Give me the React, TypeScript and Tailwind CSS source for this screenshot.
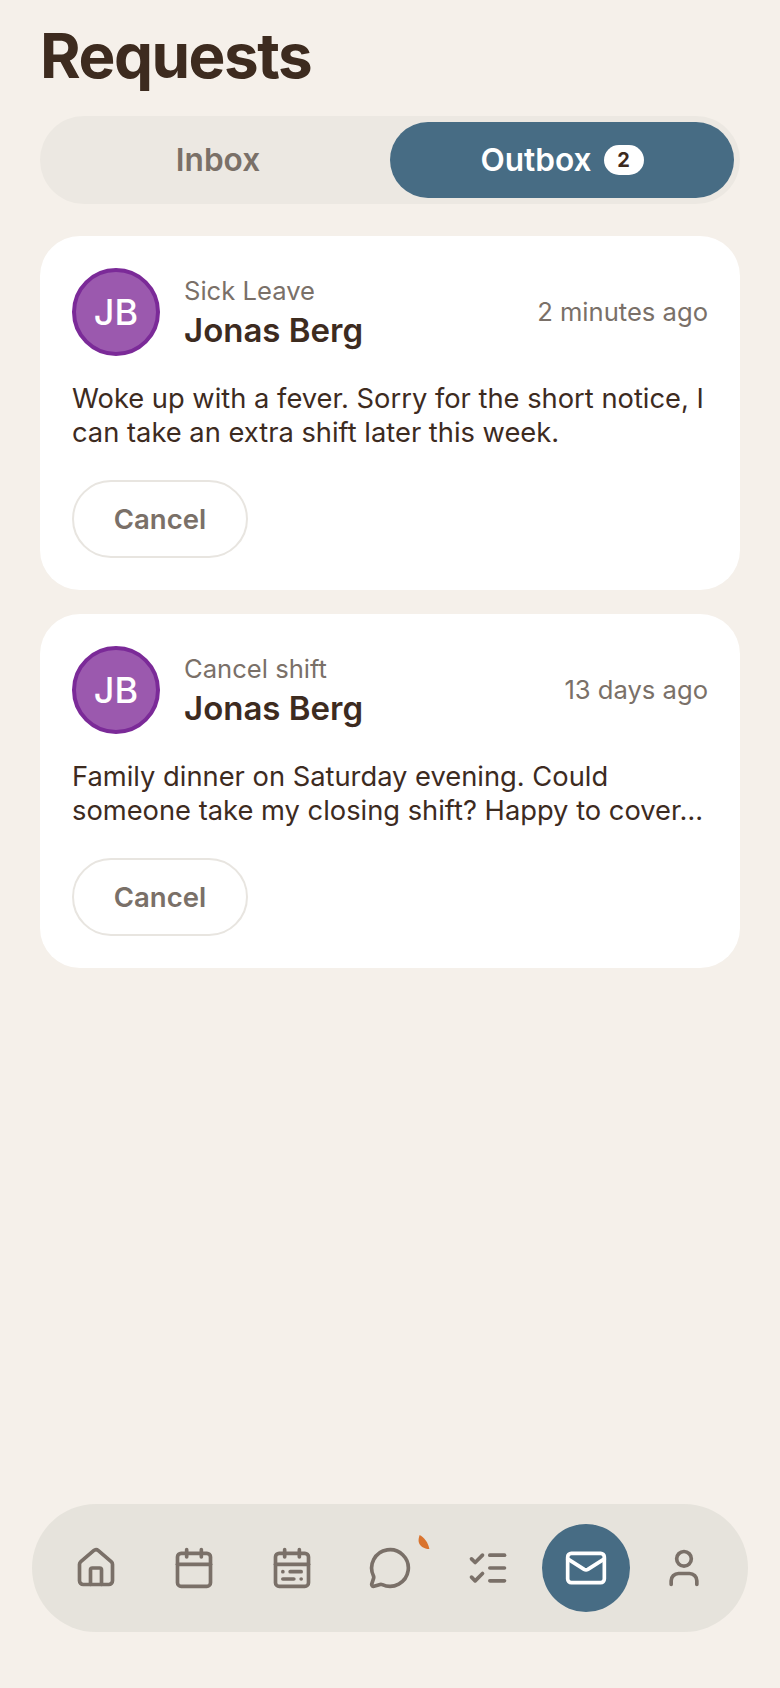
import { CalendarRange, Calendar, House, ListChecks, Mail, MessageCircle, User } from 'lucide-react'

const requests = [
  {
    type: 'Sick Leave',
    name: 'Jonas Berg',
    time: '2 minutes ago',
    message: 'Woke up with a fever. Sorry for the short notice, I can take an extra shift later this week.',
  },
  {
    type: 'Cancel shift',
    name: 'Jonas Berg',
    time: '13 days ago',
    message: 'Family dinner on Saturday evening. Could someone take my closing shift? Happy to cover…',
  },
]

function RequestCard({ type, name, time, message }: (typeof requests)[number]) {
  return (
    <div className="rounded-[40px] bg-white p-8">
      <div className="flex items-center">
        <div className="flex h-[88px] w-[88px] items-center justify-center rounded-full border-4 border-[#7b2a98] bg-[#9b59ae] text-[36px] font-medium text-white">
          JB
        </div>
        <div className="ml-6 flex-1">
          <div className="pt-px text-[25.6px] leading-[32px] text-[#7a7068]">{type}</div>
          <div className="mt-[3px] text-[33px] leading-[40px] font-semibold text-[#3d2b1f]">{name}</div>
        </div>
        <div className="pt-px text-[25.6px] text-[#7a7068]">{time}</div>
      </div>
      <p className="mt-[26px] text-[27.3px] leading-[34px] text-[#3d2b1f]">{message}</p>
      <button className="mt-[30px] block h-[78px] w-[176px] rounded-full border-2 border-[#e8e5e0] pt-px text-[27.5px] font-semibold text-[#7a7068]">
        Cancel
      </button>
    </div>
  )
}

function App() {
  return (
    <div className="flex h-[1688px] flex-col bg-[#f5f0ea] px-10 font-['Inter',sans-serif]">
      <h1 className="mt-[16px] text-[62px] leading-[80px] font-bold tracking-[-1.5px] text-[#3d2b1f]">Requests</h1>

      <div className="mt-[20px] flex h-[88px] rounded-full bg-[#ece8e2] p-[6px]">
        <div className="flex flex-1 items-center justify-center text-[31.6px] font-semibold text-[#7a7068]">Inbox</div>
        <div className="flex flex-1 items-center justify-center gap-3 rounded-full bg-[#476c84] text-[31.6px] font-semibold text-white">
          Outbox
          <span className="flex h-[30px] w-[40px] items-center justify-center rounded-full bg-white text-[20px] font-bold text-[#3d2b1f]">
            2
          </span>
        </div>
      </div>

      <div className="mt-8 flex flex-col gap-6">
        {requests.map((r) => (
          <RequestCard key={r.type} {...r} />
        ))}
      </div>

      <nav className="mt-auto mb-14 -mx-2 flex h-[128px] items-center gap-[10px] rounded-full bg-[#e6e3dc] px-5 text-[#7a7068]">
        <NavItem><House size={44} strokeWidth={2} /></NavItem>
        <NavItem><Calendar size={44} strokeWidth={2} /></NavItem>
        <NavItem><CalendarRange size={44} strokeWidth={2} /></NavItem>
        <NavItem>
          <MessageCircle size={44} strokeWidth={2} />
          {/* clipped unread dot */}
          <svg className="absolute top-[11px] right-[4px]" width="12" height="14" viewBox="0 0 10 13">
            <path d="M1 0C5 2 9 7 10 13 5 13 .5 10 0 6 -.2 4 .3 1.5 1 0Z" fill="#d9742f" />
          </svg>
        </NavItem>
        <NavItem><ListChecks size={44} strokeWidth={2} /></NavItem>
        <NavItem active><Mail size={44} strokeWidth={2} /></NavItem>
        <NavItem><User size={44} strokeWidth={2} /></NavItem>
      </nav>
    </div>
  )
}

function NavItem({ active, children }: { active?: boolean; children: React.ReactNode }) {
  return (
    <div
      className={
        active
          ? 'relative flex h-[88px] w-[88px] items-center justify-center rounded-full bg-[#476c84] text-white'
          : 'relative flex h-[88px] w-[88px] items-center justify-center rounded-full'
      }
    >
      {children}
    </div>
  )
}

export default App
